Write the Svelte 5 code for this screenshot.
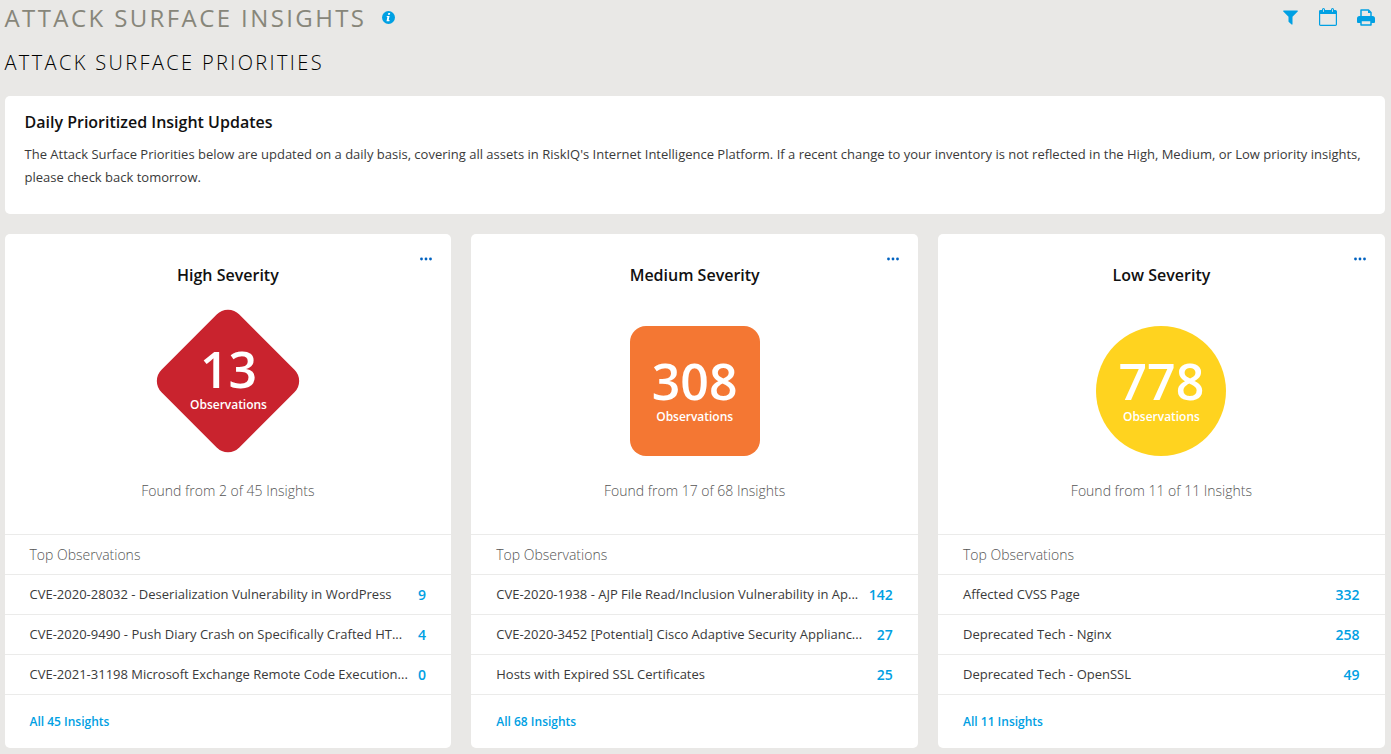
<script>
  const cards = [
    { name: 'High', shape: 'diamond', count: 13, found: 'Found from 2 of 45 Insights', all: 45, rows: [
      ['CVE-2020-28032 - Deserialization Vulnerability in WordPress', 9],
      ['CVE-2020-9490 - Push Diary Crash on Specifically Crafted HT...', 4],
      ['CVE-2021-31198 Microsoft Exchange Remote Code Execution...', 0]] },
    { name: 'Medium', shape: 'square', count: 308, found: 'Found from 17 of 68 Insights', all: 68, rows: [
      ['CVE-2020-1938 - AJP File Read/Inclusion Vulnerability in Ap...', 142],
      ['CVE-2020-3452 [Potential] Cisco Adaptive Security Applianc...', 27],
      ['Hosts with Expired SSL Certificates', 25]] },
    { name: 'Low', shape: 'circle', count: 778, found: 'Found from 11 of 11 Insights', all: 11, rows: [
      ['Affected CVSS Page', 332],
      ['Deprecated Tech - Nginx', 258],
      ['Deprecated Tech - OpenSSL', 49]] }
  ];
</script>

<div class="page">
  <header>
    <h1>ATTACK SURFACE INSIGHTS</h1>
    <svg class="info" width="13" height="13" viewBox="0 0 13 13"><circle cx="6.5" cy="6.5" r="6.5" fill="#00a0e3"/><path d="M6.300 2h1.900l-.4 1.700H5.900zM4.900 5h2.700l-.9 4.100h.9l-.2 1.200H4.500L5.400 6.100h-.8z" fill="#fff"/></svg>
    <div class="tools">
      <svg width="15" height="15" viewBox="0 0 15 15"><path d="M.7.5h13.600c.6 0 .8.6.4 1L9.500 6.800v7.300c0 .5-.5.7-.9.4L5.800 12a1 1 0 0 1-.3-.7V6.800L.3 1.500C-.1 1.100.1.5.7.5z" fill="#00a0e3"/></svg>
      <svg width="18" height="18" viewBox="0 0 18 18"><path d="M1.600 2.500h14.800q1 0 1 1v13q0 .8-1 .8H1.600q-1 0-1-.8v-13q0-1 1-1z" fill="none" stroke="#00a0e3" stroke-width="1.200"/><path d="M1 2.500h16V6H1z" fill="#00a0e3"/><path d="M4.500 1.500v2M13.500 1.500v2" stroke="#00a0e3" stroke-width="3" stroke-linecap="round"/><path d="M4.500 1.500v2M13.500 1.500v2" stroke="#e9e8e6" stroke-width=".8" stroke-linecap="round"/></svg>
      <svg width="18" height="17" viewBox="0 0 18 17"><path d="M4 8V1h7.500L14 3.500V8M4 11.500V16h10v-4.500z" fill="none" stroke="#00a0e3" stroke-width="1.500" stroke-linejoin="round"/><path d="M2.500 7h13Q18 7 18 9.500V13q0 1-1 1h-3v-2.500H4V14H1q-1 0-1-1V9.500Q0 7 2.500 7zM11 1v3h3z" fill="#00a0e3"/></svg>
    </div>
  </header>
  <h2>ATTACK SURFACE PRIORITIES</h2>
  <section class="notice">
    <h3>Daily Prioritized Insight Updates</h3>
    <p>The Attack Surface Priorities below are updated on a daily basis, covering all assets in RiskIQ's Internet Intelligence Platform. If a recent change to your inventory is not reflected in the High, Medium, or Low priority insights, please check back tomorrow.</p>
  </section>
  <main>
    {#each cards as c}
      <article>
        <div class="top">
          <svg class="dots" width="12" height="4" viewBox="0 0 12 4"><g fill="#0062c0"><circle cx="1.500" cy="2" r="1.400"/><circle cx="6" cy="2" r="1.400"/><circle cx="10.500" cy="2" r="1.400"/></g></svg>
          <h3>{c.name} Severity</h3>
          <div class="badge {c.shape}">
            <div class="label"><b>{c.count}</b><span>Observations</span></div>
          </div>
          <div class="found">{c.found}</div>
        </div>
        <div class="row head">Top Observations</div>
        {#each c.rows as r}
          <div class="row"><span>{r[0]}</span><strong>{r[1]}</strong></div>
        {/each}
        <div class="all">All {c.all} Insights</div>
      </article>
    {/each}
  </main>
</div>

<style>
  :global(body) { background: #e9e8e6; overflow: hidden; }
  .page { box-sizing: border-box; height: 754px; padding: 0 6.2px 0 4.500px; font-family: "Open Sans", sans-serif; color: #111; }
  h1, h2, h3, p { margin: 0; font-weight: 400; }
  header { display: flex; height: 36px; align-items: center; }
  h1 { font-size: 24px; line-height: 36px; letter-spacing: 2.4px; color: #87867a; white-space: nowrap; }
  .info { margin: 0 0 1px 15.500px; }
  .tools { display: flex; align-items: center; gap: 20px; margin: 0 9.800px 2px auto; }
  .tools svg:first-child { margin-right: 1px; }
  h2 { font-size: 20px; line-height: 54px; height: 60px; font-weight: 300; letter-spacing: 2.36px; color: #000; }
  .notice { box-sizing: border-box; height: 118px; padding: 16px 20px; background: #fff; border-radius: 5px; }
  .notice h3 { font-size: 16px; line-height: 20px; font-weight: 600; }
  .notice p { margin-top: 11px; font-size: 13px; line-height: 23px; color: #3a3a3a; }
  main { display: grid; grid-template-columns: repeat(3, 1fr); gap: 20px; margin-top: 20px; }
  article { height: 514px; background: #fff; border-radius: 5px; min-width: 0; }
  .top { position: relative; height: 300px; display: flex; flex-direction: column; align-items: center; }
  .dots { position: absolute; right: 19px; top: 23px; }
  .top h3 { margin-top: 30px; font-size: 16px; line-height: 22px; font-weight: 600; }
  .badge { display: flex; justify-content: center; width: 130px; height: 130px; margin-top: 40px; color: #fff; }
  .square { background: #f47733; border-radius: 16px; }
  .circle { background: #ffd31f; border-radius: 50%; }
  .diamond { background: #c9232e; width: 110px; height: 110px; border-radius: 16px; transform: rotate(45deg); margin: 40px 0 20px; }
  .label { display: flex; flex-direction: column; align-items: center; padding-top: 30px; }
  .diamond .label { box-sizing: border-box; width: 110px; height: 110px; transform: rotate(-45deg); padding: 18px 0 0 1px; }
  .label b { font-size: 50px; line-height: 50px; font-weight: 600; }
  .label span { font-size: 12px; line-height: 14px; margin-top: 4px; font-weight: 600; letter-spacing: -.02px; }
  .found { margin-top: 25px; font-size: 14px; line-height: 20px; font-weight: 300; color: #555; }
  .row { box-sizing: border-box; height: 40px; border-top: 1px solid #ebebea; display: flex; align-items: center; justify-content: space-between; padding: 0 25.300px 0 25px; font-size: 13px; color: #3a3a3a; white-space: nowrap; }
  .row span { padding-bottom: 2px; }
  .head { font-size: 14px; font-weight: 300; color: #555; }
  strong { font-size: 14px; font-weight: 600; color: #00a0e3; }
  .all { border-top: 1px solid #ebebea; padding: 18px 25px 0; font-size: 12px; line-height: 18px; font-weight: 600; color: #00a0e3; }
</style>
